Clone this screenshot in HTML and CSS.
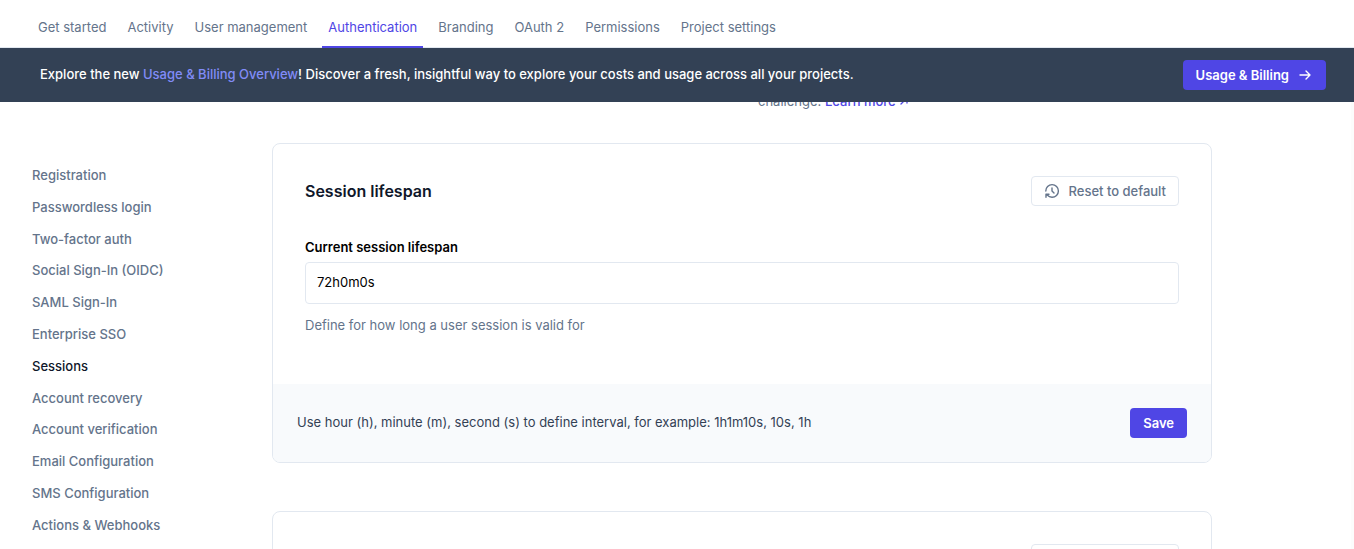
FILE: index.html
```html
<!DOCTYPE html>
<html lang="en">
<head>
<meta charset="utf-8">
<title>Authentication</title>
<link rel="stylesheet" href="styles.css">
</head>
<body>
<header class="topbar">
  <nav class="tabs">
    <a class="tab" href="#">Get started</a>
    <a class="tab" href="#">Activity</a>
    <a class="tab" href="#">User management</a>
    <a class="tab tab-active" href="#" aria-current="page">Authentication</a>
    <a class="tab" href="#">Branding</a>
    <a class="tab" href="#">OAuth 2</a>
    <a class="tab" href="#">Permissions</a>
    <a class="tab" href="#">Project settings</a>
  </nav>
</header>
<section class="banner">
  <p class="banner-text">Explore the new <a class="banner-link" href="#">Usage &amp; Billing Overview</a>! Discover a fresh, insightful way to explore your costs and usage across all your projects.</p>
  <button class="button button-primary" type="button">Usage &amp; Billing
    <svg class="icon" viewBox="0 0 16 16" fill="none" stroke="currentColor" stroke-linecap="round" stroke-linejoin="round"><path d="M3 8h10M9 4l4 4-4 4"/></svg>
  </button>
</section>
<div class="layout">
  <nav class="sidebar">
    <a class="side-link" href="#">Registration</a>
    <a class="side-link" href="#">Passwordless login</a>
    <a class="side-link" href="#">Two-factor auth</a>
    <a class="side-link" href="#">Social Sign-In (OIDC)</a>
    <a class="side-link" href="#">SAML Sign-In</a>
    <a class="side-link" href="#">Enterprise SSO</a>
    <a class="side-link side-active" href="#" aria-current="page">Sessions</a>
    <a class="side-link" href="#">Account recovery</a>
    <a class="side-link" href="#">Account verification</a>
    <a class="side-link" href="#">Email Configuration</a>
    <a class="side-link" href="#">SMS Configuration</a>
    <a class="side-link" href="#">Actions &amp; Webhooks</a>
  </nav>
  <main class="content">
    <div class="note">
      <p class="note-text">challenge. <a class="note-link" href="#">Learn more <svg class="icon-out" viewBox="0 0 10 10" fill="none" stroke="currentColor" stroke-linecap="round" stroke-linejoin="round"><path d="M2 8l6-6M3 2h5v5"/></svg></a></p>
    </div>
    <form class="card">
      <div class="card-body">
        <div class="card-head">
          <h2 class="card-title">Session lifespan</h2>
          <button class="button button-outline" type="button">
            <svg class="icon" viewBox="0 0 16 16" fill="none" stroke="currentColor" stroke-linecap="round" stroke-linejoin="round"><path d="M1.8 8A6.3 6.3 0 1 1 8 14.2c-2 0-3.6-.8-4.8-2.2L2 11.2M2 14.2v-3h3M8 5v3l2 2"/></svg>
            Reset to default
          </button>
        </div>
        <div class="field">
          <label class="field-label" for="lifespan">Current session lifespan</label>
          <input class="field-input" id="lifespan" type="text" value="72h0m0s">
          <p class="field-help">Define for how long a user session is valid for</p>
        </div>
      </div>
      <div class="card-foot">
        <p class="foot-text">Use hour (h), minute (m), second (s) to define interval, for example: 1h1m10s, 10s, 1h</p>
        <button class="button button-primary" type="submit">Save</button>
      </div>
    </form>
    <section class="card">
      <div class="card-body">
        <div class="card-head card-head-end">
          <button class="button button-outline" type="button">
            <svg class="icon" viewBox="0 0 16 16" fill="none" stroke="currentColor" stroke-linecap="round" stroke-linejoin="round"><path d="M1.8 8A6.3 6.3 0 1 1 8 14.2c-2 0-3.6-.8-4.8-2.2L2 11.2M2 14.2v-3h3M8 5v3l2 2"/></svg>
            Reset to default
          </button>
        </div>
      </div>
    </section>
  </main>
</div>
</body>
</html>
```
FILE: styles.css
```css
* { box-sizing: border-box; }
body {
  margin: 0;
  height: 100vh;
  display: flex;
  flex-direction: column;
  overflow: hidden;
  background: #fff;
  color: #0f172a;
  font: 400 13px/20px Inter, "Liberation Sans", sans-serif;
}
a { text-decoration: none; color: inherit; }
p, h2 { margin: 0; }

.topbar { flex: none; padding: 9px 32px 0; border-bottom: 1px solid #e2e8f0; }
.tabs { display: flex; gap: 9px; margin-bottom: -1px; }
.tab { padding: 8px 6px 9px; border-bottom: 2px solid transparent; color: #64748b; }
.tab-active { color: #4f46e5; border-color: #4f46e5; }

.banner {
  flex: none;
  display: flex;
  align-items: center;
  justify-content: space-between;
  padding: 12px 28px 12px 40px;
  background: #334155;
  color: #fff;
  font-weight: 500;
}
.banner-text { padding-bottom: 2px; }
.banner-link { color: #818cf8; }

.button {
  display: inline-flex;
  align-items: center;
  height: 30px;
  padding: 0 12px;
  border: 1px solid transparent;
  border-radius: 4px;
  font: 500 13px/20px Inter, "Liberation Sans", sans-serif;
}
.button-primary { gap: 8px; background: #4f46e5; color: #fff; font-weight: 600; }
.button-outline { gap: 9px; background: #fff; border-color: #e2e8f0; color: #64748b; }
.icon { width: 16px; height: 16px; stroke-width: 1.4; }
.icon-out { width: 10px; height: 10px; stroke-width: 1.3; }

.layout {
  flex: 1;
  min-height: 0;
  display: flex;
  overflow: hidden;
  padding-left: 32px;
  border-right: 3px solid #fcfcfc;
}
.sidebar {
  flex: none;
  width: 240px;
  padding-top: 63px;
  display: flex;
  flex-direction: column;
  gap: 11px;
  line-height: 1.6;
}
.side-link { color: #64748b; font-weight: 500; }
.side-active { color: #0f172a; }

.content { flex: 1; max-width: 940px; margin-top: -11px; }
.note { display: grid; grid-template-columns: 1fr 1fr; column-gap: 32px; padding: 0 33px; margin-bottom: 32px; color: #64748b; }
.note-text { grid-column: 2; }
.note-link { color: #4f46e5; font-weight: 500; }

.card { margin-bottom: 48px; border: 1px solid #e2e8f0; border-radius: 8px; overflow: hidden; }
.card-body { padding: 32px 32px 48px; }
.card-head { display: flex; align-items: center; justify-content: space-between; }
.card-head-end { justify-content: flex-end; }
.card-title { font-size: 16px; line-height: 24px; font-weight: 600; }
.field { display: flex; flex-direction: column; margin-top: 31px; }
.field-label { color: #000; font-weight: 600; margin-bottom: 5px; }
.field-input {
  width: 100%;
  height: 42px;
  padding: 0 11px 2px;
  border: 1px solid #e2e8f0;
  border-radius: 4px;
  background: #fff;
  color: #000;
  font: inherit;
}
.field-help { margin: 11px 0 1px; color: #64748b; }
.card-foot {
  display: flex;
  align-items: center;
  justify-content: space-between;
  padding: 24px;
  background: #f8fafc;
  color: #334155;
}
.foot-text { padding-bottom: 2px; }
```
